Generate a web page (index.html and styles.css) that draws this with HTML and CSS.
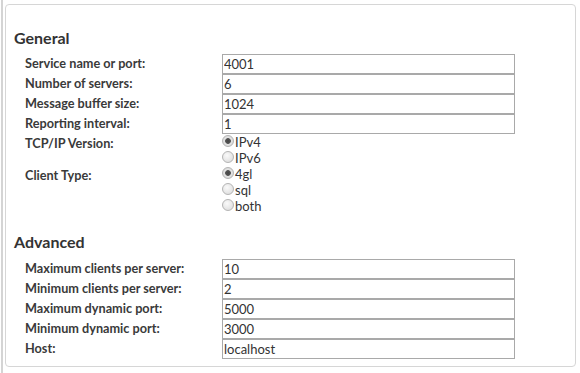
FILE: index.html
```html
<!DOCTYPE html>
<html lang="en">
<head>
  <meta charset="UTF-8" />
  <title>Server settings</title>
  <link rel="stylesheet" href="styles.css">
</head>
<body>
  <div class="frame">
    <div class="painel">
      <!-- General -->
      <h3>General</h3>
      <div class="grade">
        <label>Service name or port:</label>
        <input type="text" value="4001" />
        <label>Number of servers:</label>
        <input type="text" value="6" />
        <label>Message buffer size:</label>
        <input type="text" value="1024" />
        <label>Reporting interval:</label>
        <input type="text" value="1" />
        <label>TCP/IP Version:</label>
        <div class="opcoes">
          <label class="radio"><input type="radio" name="ip" checked />IPv4</label>
          <label class="radio"><input type="radio" name="ip" />IPv6</label>
        </div>
        <label>Client Type:</label>
        <div class="opcoes">
          <label class="radio"><input type="radio" name="tipo" checked />4gl</label>
          <label class="radio"><input type="radio" name="tipo" />sql</label>
          <label class="radio"><input type="radio" name="tipo" />both</label>
        </div>
      </div>

      <!-- Advanced -->
      <h3 class="segundo">Advanced</h3>
      <div class="grade">
        <label>Maximum clients per server:</label>
        <input type="text" value="10" />
        <label>Minimum clients per server:</label>
        <input type="text" value="2" />
        <label>Maximum dynamic port:</label>
        <input type="text" value="5000" />
        <label>Minimum dynamic port:</label>
        <input type="text" value="3000" />
        <label>Host:</label>
        <input type="text" value="localhost" />
      </div>
    </div>
  </div>
</body>
</html>
```

FILE: styles.css
```css
* {
  margin: 0;
  padding: 0;
  box-sizing: border-box;
}
html, body {
  height: 100%;
}
body {
  font-family: Lato, "Open Sans", sans-serif;
  color: #333;
  background: #fff;
  padding: 0 4px 0 1px;
}
.frame {
  border-left: 2px solid #d4d4d4;
  height: 100%;
  padding-top: 4px;
}
.painel {
  margin-left: 2px;
  height: 363px;
  border: 1px solid #d6d6d6;
  border-radius: 4px;
  padding: 24px 0 0 8px;
}
h3 {
  font-size: 16px;
  line-height: 18px;
  font-weight: bold;
  color: #333;
  margin-bottom: 7px;
}
h3.segundo {
  margin-top: 19px;
  margin-bottom: 8px;
}
.grade {
  display: grid;
  grid-template-columns: 197px 293px;
  margin-left: 11px;
}
.grade > label {
  font-size: 12.7px;
  font-weight: bold;
  line-height: 16px;
  padding-top: 1px;
  color: #3a3a3a;
}
input[type="text"] {
  height: 20px;
  border: 1px solid #a9a9a9;
  font-family: Lato, sans-serif;
  font-size: 13px;
  color: #333;
  padding: 0 1px;
  outline: none;
}
.opcoes {
  display: flex;
  flex-direction: column;
}
.radio {
  display: flex;
  align-items: center;
  height: 16px;
  font-size: 13px;
  color: #333;
}
.radio input {
  appearance: none;
  width: 12px;
  height: 12px;
  margin-right: 1px;
  border: 1px solid #b4b4b4;
  border-radius: 50%;
  background: radial-gradient(circle at 40% 35%, #fafafa, #d8d8d8);
  position: relative;
  top: -1px;
}
.radio input:checked {
  background: radial-gradient(circle, #444 0, #555 2.5px, #e4e4e4 3.2px, #d0d0d0 100%);
}
```
